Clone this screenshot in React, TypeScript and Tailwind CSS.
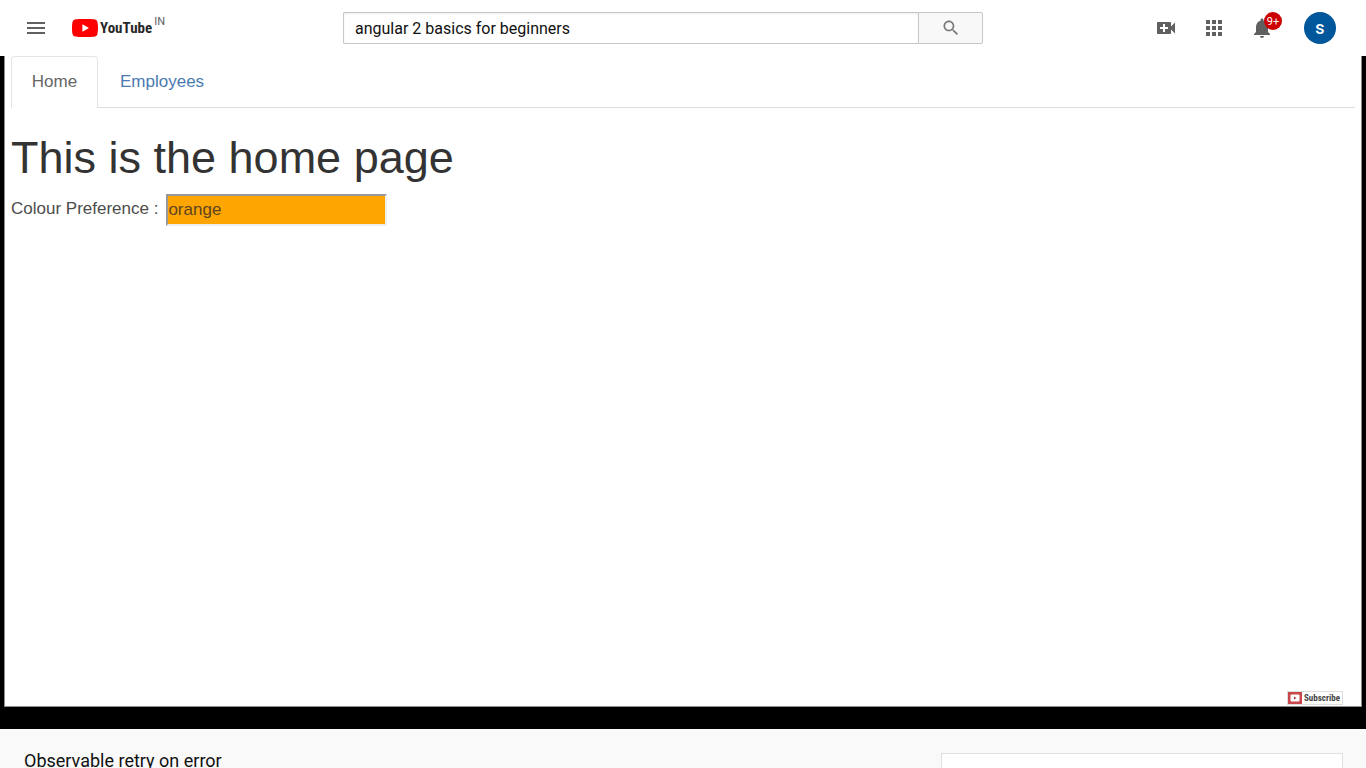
function MenuIcon() {
  return (
    <svg viewBox="0 0 24 24" className="size-6" fill="#606060" aria-hidden="true" shapeRendering="crispEdges">
      <path d="M3 18h18v-2H3v2zm0-5h18v-2H3v2zm0-7v2h18V6H3z" />
    </svg>
  );
}

function PlayBadge() {
  return (
    <svg viewBox="0 0 26 18" className="h-[18px] w-[26px]" aria-hidden="true">
      <path
        fill="#ff0000"
        d="M25.4 2.8A3.3 3.3 0 0 0 23.1.5C21.1 0 13 0 13 0S4.900 0 2.900.5A3.300 3.300 0 0 0 .6 2.800C0 4.900 0 9 0 9s0 4.100.6 6.200a3.300 3.300 0 0 0 2.300 2.300C4.900 18 13 18 13 18s8.100 0 10.100-.5a3.300 3.300 0 0 0 2.300-2.300C26 13.100 26 9 26 9s0-4.100-.6-6.200z"
      />
      <path fill="#fff" d="M10.400 5.200v7.600L17 9z" />
    </svg>
  );
}

function SearchIcon() {
  return (
    <svg viewBox="0 0 24 24" className="size-5" fill="#7a7a7a" aria-hidden="true">
      <path d="M15.500 14h-.79l-.28-.27C15.410 12.590 16 11.110 16 9.500 16 5.910 13.090 3 9.500 3S3 5.910 3 9.500 5.910 16 9.500 16c1.610 0 3.090-.59 4.230-1.570l.27.28v.79l5 4.990L20.490 19l-4.990-5zm-6 0C7.010 14 5 11.990 5 9.500S7.010 5 9.500 5 14 7.010 14 9.500 11.990 14 9.500 14z" />
    </svg>
  );
}

function CreateIcon() {
  return (
    <svg viewBox="0 0 24 24" className="size-6" fill="#606060" aria-hidden="true">
      <path d="M17 10.500V7c0-.55-.45-1-1-1H4c-.55 0-1 .45-1 1v10c0 .55.45 1 1 1h12c.55 0 1-.45 1-1v-3.500l4 4v-11l-4 4zM14 13h-3v3H9v-3H6v-2h3V8h2v3h3v2z" />
    </svg>
  );
}

function AppsIcon() {
  return (
    <svg viewBox="0 0 24 24" className="size-6" fill="#606060" aria-hidden="true" shapeRendering="crispEdges">
      <path d="M4 8h4V4H4v4zm6 12h4v-4h-4v4zm-6 0h4v-4H4v4zm0-6h4v-4H4v4zm6 0h4v-4h-4v4zm6-10v4h4V4h-4zm-6 4h4V4h-4v4zm6 6h4v-4h-4v4zm0 6h4v-4h-4v4z" />
    </svg>
  );
}

function BellIcon() {
  return (
    <svg viewBox="0 0 24 24" className="size-6" fill="#606060" aria-hidden="true">
      <path d="M12 22c1.100 0 2-.9 2-2h-4c0 1.100.890 2 2 2zm6-6v-5c0-3.070-1.640-5.640-4.500-6.320V4c0-.83-.67-1.500-1.500-1.500s-1.500.67-1.500 1.500v.68C7.630 5.360 6 7.920 6 11v5l-2 2v1h16v-1l-2-2z" />
    </svg>
  );
}

function Header() {
  return (
    <header className="flex h-14 shrink-0 items-center bg-white px-4">
      <div className="flex flex-1 items-center">
        <button type="button" aria-label="Guide" className="flex size-10 items-center justify-center">
          <MenuIcon />
        </button>
        <a href="#home" aria-label="YouTube IN" className="ml-4 flex items-center">
          <PlayBadge />
          <span className="ml-0.5 font-['Roboto_Condensed',Roboto,sans-serif] text-[15px] leading-6 font-bold text-[#282828]">
            YouTube
          </span>
          <span className="mb-3 ml-0.5 text-[11px] leading-3 text-[#606060]">IN</span>
        </a>
      </div>

      <form className="flex h-8 w-[640px]" role="search" onSubmit={(e) => e.preventDefault()}>
        <input
          type="text"
          aria-label="Search"
          defaultValue="angular 2 basics for beginners"
          className="min-w-0 flex-1 rounded-l-xs border border-r-0 border-[#c6c6c6] bg-white px-[11px] pt-0.5 text-base text-[#111] shadow-[inset_0_1px_2px_#eee] outline-none"
        />
        <button
          type="submit"
          aria-label="Search"
          className="flex w-[65px] items-center justify-center rounded-r-xs border border-[#c6c6c6] bg-[#f8f8f8]"
        >
          <SearchIcon />
        </button>
      </form>

      <div className="flex flex-1 items-center justify-end gap-2 pl-6.5 pr-3.5">
        <button type="button" aria-label="Create" className="flex size-10 items-center justify-center">
          <CreateIcon />
        </button>
        <button type="button" aria-label="Apps" className="flex size-10 items-center justify-center">
          <AppsIcon />
        </button>
        <button type="button" aria-label="Notifications" className="relative flex size-10 items-center justify-center">
          <BellIcon />
          <span className="absolute top-1 right-0 flex size-[18px] items-center justify-center rounded-full bg-[#cc0000] text-[11px] leading-none text-white">
            9+
          </span>
        </button>
        <button
          type="button"
          aria-label="Account"
          className="ml-3.5 flex size-8 items-center justify-center rounded-full bg-[#01579b] text-lg font-medium text-white"
        >
          s
        </button>
      </div>
    </header>
  );
}

function Player() {
  return (
    <section className="flex min-h-0 flex-1 bg-black px-1 pb-[22px]" aria-label="Video player">
      <div className="flex flex-1 flex-col border border-t-0 border-[#8c8c8c] bg-white px-1.5 font-['Liberation_Sans',Arial,sans-serif] text-[17px] leading-6 text-[#4c4c4c]">
        <nav className="flex h-[52px] border-b border-[#dddddd]">
          <a
            href="#home"
            className="-mb-px flex w-[87px] items-center justify-center rounded-t-sm border border-b-0 border-[#e4e4e4] bg-white pb-0.5 text-[#666]"
          >
            Home
          </a>
          <a href="#employees" className="flex items-center px-[22px] text-[#4a7ab0]">
            Employees
          </a>
        </nav>
        <h1 className="mt-[25px] text-[45px] leading-[50px] text-[#333]">This is the home page</h1>
        <div className="mt-[11px] flex items-center gap-2">
          <label htmlFor="colour" className="pb-0.5">Colour Preference :</label>
          <input
            id="colour"
            type="text"
            defaultValue="orange"
            className="h-8 w-[221px] border-2 border-t-[#999] border-r-[#eee] border-b-[#eee] border-l-[#999] bg-[#ffa500] text-[#5c4420] outline-none"
          />
        </div>
        <button
          type="button"
          className="mt-auto mr-3 mb-px flex h-3.5 items-center self-end border border-[#ddd] bg-white font-['Roboto_Condensed',Roboto,sans-serif] text-[9px] leading-3 font-bold text-[#444]"
        >
          <svg viewBox="0 0 14 12" className="h-3 w-3.5" aria-hidden="true">
            <path fill="#c9474b" d="M0 0h14v12H0z" />
            <rect x="2.500" y="2.500" width="9" height="7" rx="1" fill="#fff" />
            <path fill="#a9383c" d="M6 4.500v3L8.500 6z" />
          </svg>
          <span className="px-0.5">Subscribe</span>
        </button>
      </div>
    </section>
  );
}

export default function App() {
  return (
    <div className="flex h-screen flex-col overflow-hidden bg-[#f9f9f9] font-[Roboto,sans-serif]">
      <Header />
      <Player />
      <main className="flex h-[39px] shrink-0 items-start justify-between pr-[23px] pl-6">
        <h2 className="mt-5 text-lg leading-6 text-[#111]">Observable retry on error</h2>
        <aside className="mt-6 h-24 w-[402px] border border-[#e0e0e0] bg-white" aria-label="Up next" />
      </main>
    </div>
  );
}
